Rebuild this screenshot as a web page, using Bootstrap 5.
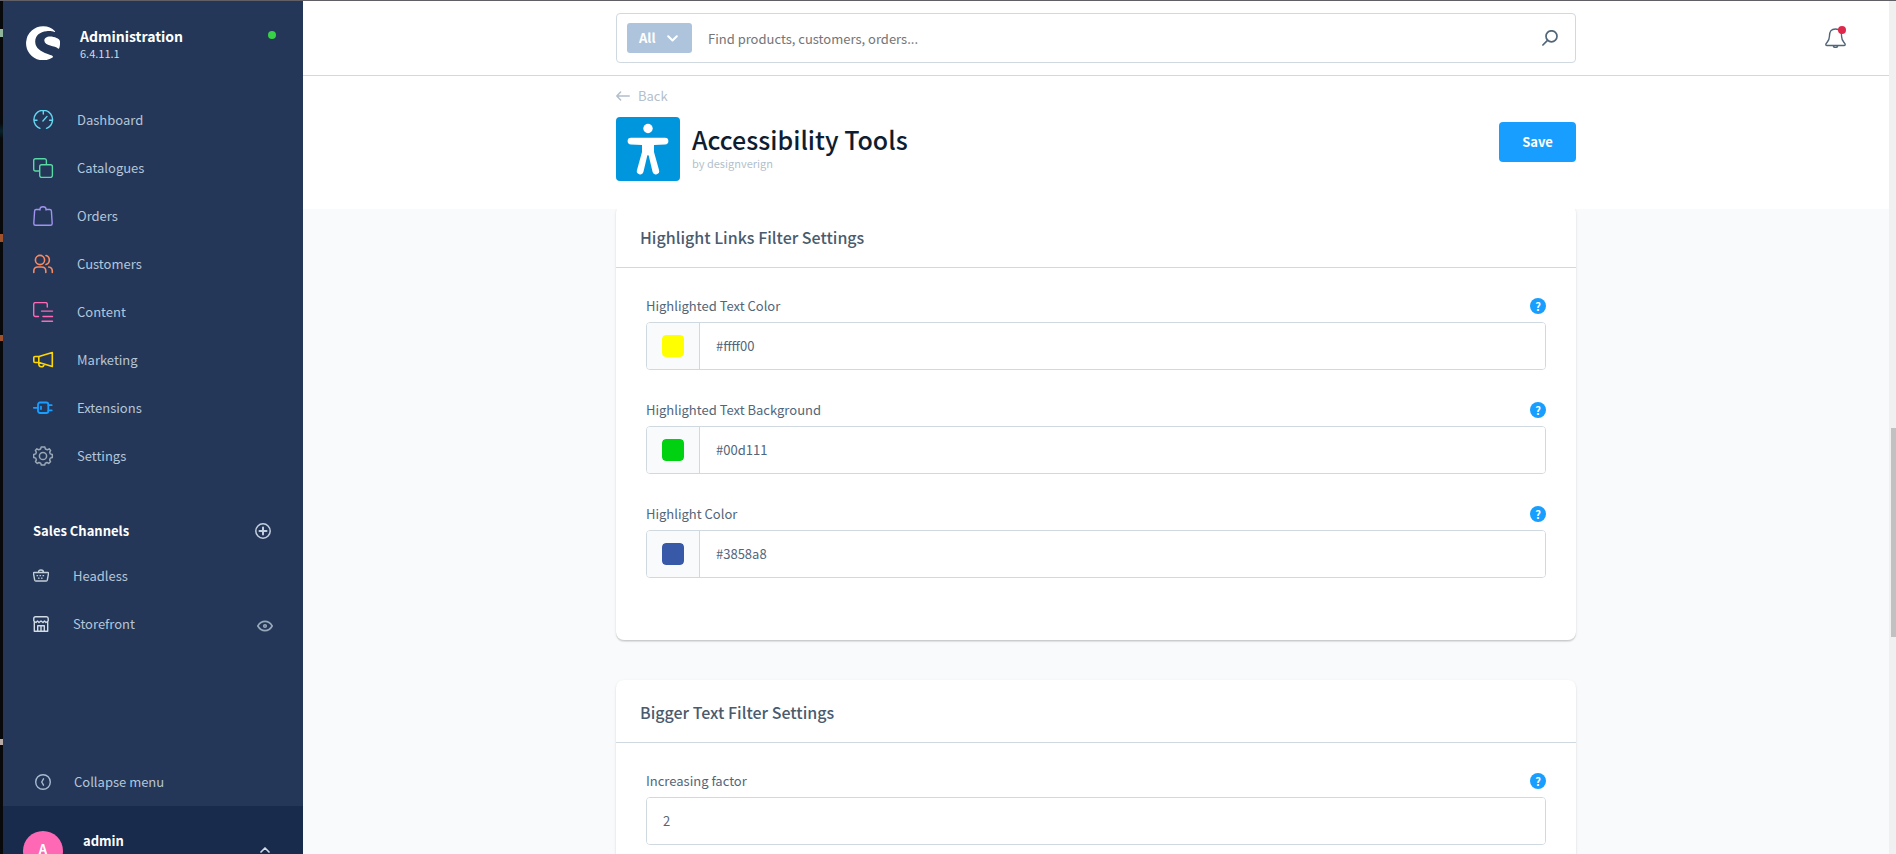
<!DOCTYPE html>
<html lang="en">
<head>
<meta charset="utf-8">
<meta name="viewport" content="width=device-width, initial-scale=1">
<title>Accessibility Tools | Administration</title>
<link href="https://cdn.jsdelivr.net/npm/bootstrap@5.3.0/dist/css/bootstrap.min.css" rel="stylesheet">
<style>
  body { font-family: "Source Sans Pro", "Noto Sans CJK SC", sans-serif; font-size: 13px; line-height: 20px; color: #52667a; background: #f9fafb; }
  svg { display: block; flex: none; fill: none; stroke: currentColor; stroke-width: 1.4; stroke-linecap: round; stroke-linejoin: round; }
  .bare { border: 0; background: none; padding: 0; }
  .app { height: 100vh; border-top: 1px solid #606066; overflow: hidden; }
  .edge { flex: 0 0 3px; background: linear-gradient(#07090b 28px, #8fb59b 28px 36px, #07090b 36px 122px, #08222b 130px, #07090b 138px 233px, #a0522d 233px 241px, #07090b 241px 334px, #a0522d 334px 340px, #07090b 340px 738px, #b9aaa6 738px 744px, #07090b 744px); }
  .sidebar { flex: 0 0 300px; background: #243758; color: #b4c6da; }
  .sidebar a, .sidebar button { color: inherit; text-decoration: none; }
  .brand { gap: 20px; padding: 25px 27px 0 23px; height: 95px; }
  .brand-name { font-size: 14px; font-weight: 700; color: #fff; line-height: 20px; }
  .brand-version { font-size: 11px; line-height: 14px; color: #d1dae6; }
  .status-dot { width: 8px; height: 8px; margin-top: 5px; background: #37d046; }
  .menu-row { height: 48px; padding: 0 30px; gap: 21px; }
  .channel-row { gap: 24px; }
  .channel-head { height: 42px; padding: 0 32px 0 30px; margin-top: 30px; color: #fff; font-weight: 700; }
  .collapse-row { height: 48px; padding: 0 32px; gap: 23px; }
  .user-bar { flex: 0 0 48px; background: #182b4d; padding: 25px 33px 0 20px; overflow: hidden; }
  .avatar { flex: none; width: 40px; height: 40px; background: #ff68b4; color: #fff; font-weight: 700; }
  .user-name { font-weight: 700; color: #fff; margin-left: 20px; }
  .topbar { height: 75px; border-bottom: 1px solid #d1d9e0; }
  .side-col { flex: 1 1 0; }
  .center-col { flex: 0 1 960px; min-width: 0; }
  .search { height: 50px; border: 1px solid #d1d9e0; border-radius: 4px; padding: 0 17px 0 10px; }
  .search-type { height: 30px; width: 65px; padding: 0 14px 0 12px; background: #aec4dc; border: 0; border-radius: 3px; color: #fff; font-weight: 700; }
  .search input { border: 0; outline: 0; padding: 2px 16px 0; color: #52667a; }
  .search input::placeholder { color: #757575; opacity: 1; }
  .bell { margin-right: 43px; color: #52667a; }
  .bell-dot { position: absolute; top: -2px; right: 0; width: 8px; height: 8px; background: #de294c; }
  .page-head { height: 133px; }
  .back { color: #b3bfcc; text-decoration: none; gap: 8px; padding-top: 10px; margin-bottom: 11px; }
  .app-icon { background: #0096de; border-radius: 4px; }
  .page-title { font-size: 25px; line-height: 32px; font-weight: 500; color: #0f1d31; padding-top: 6px; }
  .page-author { font-size: 11px; line-height: 16px; color: #b3bfcc; }
  .save { width: 77px; height: 40px; margin-top: 5px; border: 0; border-radius: 4px; background: #189eff; color: #fff; font-weight: 700; }
  .scroll { background: #f9fafb; overflow: hidden; }
  .cards { gap: 40px; margin-top: -4px; }
  .panel { background: #fff; border-radius: 8px; box-shadow: 0 1px 1px rgba(0,0,0,.08), 0 2px 1px rgba(0,0,0,.06), 0 1px 3px rgba(0,0,0,.1); }
  .panel-title { height: 63px; padding: 3px 20px 0 24px; margin: 0; border-bottom: 1px solid #d1d9e0; font-size: 16px; font-weight: 500; color: #4a5b6e; }
  .panel-content { padding: 30px; }
  .field { margin-bottom: 32px; }
  .field-head { height: 16px; margin-bottom: 8px; }
  .help { width: 16px; height: 16px; border: 0; padding: 0; border-radius: 50%; background: #189eff; color: #fff; font-size: 11px; line-height: 16px; font-weight: 700; }
  .field-box { height: 48px; border: 1px solid #d1d9e0; border-radius: 4px; overflow: hidden; }
  .field-box input[type=text] { border: 0; outline: 0; padding: 0 16px; color: #52667a; background: #fff; min-width: 0; }
  .swatch-cell { flex: 0 0 53px; background: #f9fafb; border-right: 1px solid #d1d9e0; }
  .swatch-cell input { width: 22px; height: 22px; border: 0; padding: 0; border-radius: 4px; appearance: none; overflow: hidden; background: none; }
  .swatch-cell input::-webkit-color-swatch-wrapper { padding: 0; }
  .swatch-cell input::-webkit-color-swatch { border: 0; border-radius: 4px; }
  .track { flex: 0 0 7px; background: #f0f0f0; padding-left: 2px; }
  .track-gap { flex: 427 1 0; }
  .track-thumb { flex: 209 1 0; background: #c1c1c1; }
  .track-rest { flex: 217 1 0; }
</style>
</head>
<body>
<div class="app d-flex">
  <div class="edge"></div>

  <aside class="sidebar d-flex flex-column">
    <div class="brand d-flex align-items-start">
      <svg width="34" height="34" viewBox="0 0 34 34" style="fill:#fff;stroke:none"><path d="M29 5.200A17 17 0 1 0 26.600 31.400C27.200 31 27 30.200 26.300 29.800C22 27.500 9.200 25.500 9.200 15.500C9.200 9.500 14 5.800 20.500 5.200C23.500 4.900 26.500 5.200 28.400 5.900C29 6.100 29.400 5.600 29 5.200Z"/><path d="M33.900 15C33.500 12.800 28.600 10.600 24 10.600C20.500 10.600 18.300 12.300 18.300 14.600C18.300 20.200 29.500 19.800 32 22.400C32.500 22.900 33.100 22.600 33.300 22C34 19.800 34.200 17.200 33.900 15Z"/></svg>
      <div class="flex-grow-1">
        <div class="brand-name">Administration</div>
        <div class="brand-version">6.4.11.1</div>
      </div>
      <span class="status-dot rounded-circle"></span>
    </div>

    <nav aria-label="Main menu">
      <a href="#" class="menu-row d-flex align-items-center"><svg width="23" height="20" viewBox="0 0 23 20" color="#64d6f0"><path d="M7 18.300A9.300 9.300 0 1 1 13.500 18.300M10.300 1V4M1 10.300H4M16.600 10.300H19.600M9.900 11L14 6.400"/></svg>Dashboard</a>
      <a href="#" class="menu-row d-flex align-items-center"><svg width="23" height="20" viewBox="0 0 23 20" color="#57d9a3"><path d="M6 13H2.500Q.7 13 .7 11.200V2.500Q.7.7 2.500.7H11.700Q13.400.7 13.400 2.500V6"/><rect x="6.700" y="6.700" width="12.700" height="12.700" rx="1.800"/></svg>Catalogues</a>
      <a href="#" class="menu-row d-flex align-items-center"><svg width="23" height="20" viewBox="0 0 23 20" color="#a092f0"><path d="M6.500 3.500H3.200Q1.700 3.500 1.600 5L.8 17.500Q.8 19.300 2.500 19.300H17.500Q19.200 19.300 19.200 17.500L18.400 5Q18.300 3.500 16.800 3.500H13.500M7 4V3Q7 .7 10 .7T13 3V4"/></svg>Orders</a>
      <a href="#" class="menu-row d-flex align-items-center"><svg width="23" height="20" viewBox="0 0 23 20" color="#f88962" style="stroke-width:1.6"><circle cx="7" cy="6" r="4.600"/><path d="M.8 18.500V17Q.8 13 5 13H8.500Q12.800 13 12.800 17V18.500M13 1.500A4.700 4.700 0 0 1 13 10.500M15.700 13Q19.300 13.500 19.300 17V18.500"/></svg>Customers</a>
      <a href="#" class="menu-row d-flex align-items-center"><svg width="23" height="20" viewBox="0 0 23 20" color="#ff68b4"><path d="M5.500 14.500H2.500Q.7 14.500 .7 12.800V2.300Q.7.600 2.500.600H12.500Q14.300.600 14.300 2.300V5M8.500 9.100H19.500M10 14.500H19.500M9 19.300H19.500"/></svg>Content</a>
      <a href="#" class="menu-row d-flex align-items-center"><svg width="23" height="20" viewBox="0 0 23 20" color="#ffd700" style="stroke-width:1.600"><path d="M.8 7.500Q.8 6.500 2 6.500H6L19.300 2.600V16.600L6 12.500H2Q.8 12.500 .8 11.300ZM5.800 6.500V12.500M5.800 12.500Q5.500 16.800 8.300 16.800T11 14"/></svg>Marketing</a>
      <a href="#" class="menu-row d-flex align-items-center"><svg width="23" height="20" viewBox="0 0 23 20" color="#189eff" style="stroke-width:1.800"><rect x="5" y="4.500" width="10.300" height="10.500" rx="2"/><path d="M.8 9.800H5M15.500 7.200H18.700M15.500 12.400H18.700M8 8.600V11" /></svg>Extensions</a>
      <a href="#" class="menu-row d-flex align-items-center"><svg width="23" height="20" viewBox="0 0 23 20" color="#9aa8b5" style="stroke-width:1.500"><circle cx="10" cy="10" r="3.600"/><path d="M8.200 1H11.800L12.400 3L14.300 3.800L16.200 2.800L17.600 4.500L16.700 6.200L17.300 7.900L19.300 8.500V11.500L17.300 12.100L16.600 13.900L17.500 15.700L15.700 17.400L14 16.500L12.300 17.200L11.700 19H8.300L7.700 17.200L6 16.500L4.300 17.400L2.500 15.700L3.400 13.900L2.700 12.100L.7 11.500V8.500L2.700 7.900L3.300 6.200L2.400 4.500L3.900 2.800L5.700 3.800L7.600 3Z"/></svg>Settings</a>
    </nav>

    <div class="channel-head d-flex align-items-center justify-content-between">
      <span>Sales Channels</span>
      <button type="button" class="bare" aria-label="Add sales channel"><svg width="16" height="16" viewBox="0 0 16 16" color="#c3d0df" style="stroke-width:1.500"><circle cx="8" cy="8" r="7.200"/><path d="M8 4.500V11.500M4.500 8H11.500" stroke-width="2"/></svg></button>
    </div>
    <nav aria-label="Sales channels" class="flex-grow-1 overflow-hidden">
      <a href="#" class="menu-row channel-row d-flex align-items-center"><svg width="16" height="16" viewBox="0 0 16 16" color="#c3cfdb"><path d="M1 4.500H15Q15.700 4.500 15.500 5.500L14.300 12.200Q14.100 13 13.300 13H2.700Q1.900 13 1.700 12.200L.5 5.500Q.3 4.500 1 4.500ZM5.500 4.500Q5.500 2 8 2T10.500 4.500"/><path d="M4 7.700H12.500M5.500 10.200H11" stroke-dasharray=".6 2.400" stroke-width="1.200"/></svg>Headless</a>
      <a href="#" class="menu-row channel-row d-flex align-items-center"><svg width="16" height="16" viewBox="0 0 16 16" color="#d3dce6"><path d="M.8 5V2.500Q.8.700 2.500.700H13.500Q15.200.700 15.200 2.500V5L13 6.500L11.500 5L10 6.500L8 5L6 6.500L4.500 5L3 6.500ZM1.300 6.500V15.300H14.700V6.500M4.700 15V9.800H11.300V15M8 9.800V15"/></svg>Storefront<span class="ms-auto pt-1"><svg width="16" height="12" viewBox="0 0 16 12" color="#98a9ba" style="stroke-width:1.600"><path d="M.8 6Q3.500 1.400 8 1.400T15.200 6Q12.500 10.600 8 10.600T.8 6Z"/><circle cx="8" cy="6" r="1.300"/></svg></span></a>
    </nav>
    <button type="button" class="bare collapse-row d-flex align-items-center justify-content-start"><svg width="16" height="16" viewBox="0 0 16 16" color="#a9bbd0"><circle cx="8" cy="8" r="7.300"/><path d="M8.500 4.800L6.700 8L8.500 11.200"/></svg>Collapse menu</button>
    <div class="user-bar d-flex align-items-start">
      <span class="avatar rounded-circle d-flex align-items-center justify-content-center pb-1">A</span>
      <span class="user-name">admin</span>
      <button type="button" class="bare ms-auto mt-3" aria-label="User menu"><svg width="10" height="6" viewBox="0 0 10 6" color="#d1dae6" style="stroke-width:1.700"><path d="M1 5L5 1L9 5"/></svg></button>
    </div>
  </aside>

  <main class="flex-grow-1 d-flex flex-column bg-white overflow-hidden">
    <header class="topbar d-flex align-items-center flex-shrink-0">
      <div class="side-col"></div>
      <form class="search center-col d-flex align-items-center" role="search">
        <button type="button" class="search-type d-flex align-items-center justify-content-between">All
          <svg width="11" height="7" viewBox="0 0 11 7" style="stroke-width:2"><path d="M1.200 1.200L5.500 5.500L9.800 1.200"/></svg></button>
        <input class="flex-grow-1" type="search" aria-label="Search" placeholder="Find products, customers, orders...">
        <button type="submit" class="bare" aria-label="Search"><svg width="16" height="16" viewBox="0 0 16 16" color="#52667a" style="stroke-width:1.700"><circle cx="9.500" cy="6.300" r="5.500"/><path d="M5.500 10.400L.9 15"/></svg></button>
      </form>
      <div class="side-col d-flex justify-content-end">
        <button type="button" class="bare bell position-relative" aria-label="Notifications"><svg width="21" height="20" viewBox="0 0 21 20"><path d="M2 17.500Q.4 17.500 1 15.800C2.500 13.500 4.400 12.500 4.400 8.500C4.400 3.500 6 1 10.500 1S16.600 3.500 16.600 8.500C16.600 12.500 18.500 13.500 20 15.800Q20.600 17.500 19 17.500ZM8.300 17.800Q8.500 19.400 10.500 19.400T12.700 17.800"/></svg><span class="bell-dot rounded-circle"></span></button>
      </div>
    </header>

    <section class="page-head d-flex justify-content-center flex-shrink-0">
      <div class="center-col">
        <a href="#" class="back d-flex align-items-center"><svg width="14" height="10" viewBox="0 0 14 10" style="stroke-width:1.500"><path d="M13.300 5H.8M4.600 1L.8 5L4.600 9"/></svg>Back</a>
        <div class="d-flex align-items-start">
          <svg class="app-icon" width="64" height="64" viewBox="0 0 64 64" style="fill:#fff;stroke:none"><circle cx="32" cy="11.500" r="4.700"/><path d="M15 20.700H49A3.300 3.300 0 0 1 49 27.500L38 28V35L43 53A3.300 3.300 0 0 1 36.600 55L32.800 39Q32 37 31.200 39L27.400 55A3.300 3.300 0 0 1 21 53L26 35V28L15 27.500A3.300 3.300 0 0 1 15 20.700Z"/></svg>
          <div class="flex-grow-1 ms-2 ps-1">
            <h1 class="page-title m-0">Accessibility Tools</h1>
            <div class="page-author">by designverign</div>
          </div>
          <button type="button" class="save">Save</button>
        </div>
      </div>
    </section>

    <div class="scroll flex-grow-1 d-flex justify-content-center">
      <div class="cards center-col d-flex flex-column">
        <section class="panel">
          <h2 class="panel-title d-flex align-items-center">Highlight Links Filter Settings</h2>
          <div class="panel-content">
            <div class="field">
              <div class="field-head d-flex align-items-center justify-content-between"><label for="textColor">Highlighted Text Color</label><button type="button" class="help">?</button></div>
              <div class="field-box d-flex"><span class="swatch-cell d-flex align-items-center justify-content-center"><input type="color" value="#ffff00" aria-label="Pick highlighted text color"></span><input id="textColor" class="flex-grow-1" type="text" value="#ffff00"></div>
            </div>
            <div class="field">
              <div class="field-head d-flex align-items-center justify-content-between"><label for="textBackground">Highlighted Text Background</label><button type="button" class="help">?</button></div>
              <div class="field-box d-flex"><span class="swatch-cell d-flex align-items-center justify-content-center"><input type="color" value="#00d111" aria-label="Pick highlighted text background"></span><input id="textBackground" class="flex-grow-1" type="text" value="#00d111"></div>
            </div>
            <div class="field">
              <div class="field-head d-flex align-items-center justify-content-between"><label for="highlightColor">Highlight Color</label><button type="button" class="help">?</button></div>
              <div class="field-box d-flex"><span class="swatch-cell d-flex align-items-center justify-content-center"><input type="color" value="#3858a8" aria-label="Pick highlight color"></span><input id="highlightColor" class="flex-grow-1" type="text" value="#3858a8"></div>
            </div>
          </div>
        </section>
        <section class="panel">
          <h2 class="panel-title d-flex align-items-center">Bigger Text Filter Settings</h2>
          <div class="panel-content">
            <div class="field">
              <div class="field-head d-flex align-items-center justify-content-between"><label for="factor">Increasing factor</label><button type="button" class="help">?</button></div>
              <div class="field-box d-flex"><input id="factor" class="flex-grow-1" type="text" value="2"></div>
            </div>
          </div>
        </section>
      </div>
    </div>
  </main>

  <div class="track d-flex flex-column" aria-hidden="true">
    <div class="track-gap"></div><div class="track-thumb"></div><div class="track-rest"></div>
  </div>
</div>
<script src="https://cdn.jsdelivr.net/npm/bootstrap@5.3.0/dist/js/bootstrap.bundle.min.js"></script>
</body>
</html>
